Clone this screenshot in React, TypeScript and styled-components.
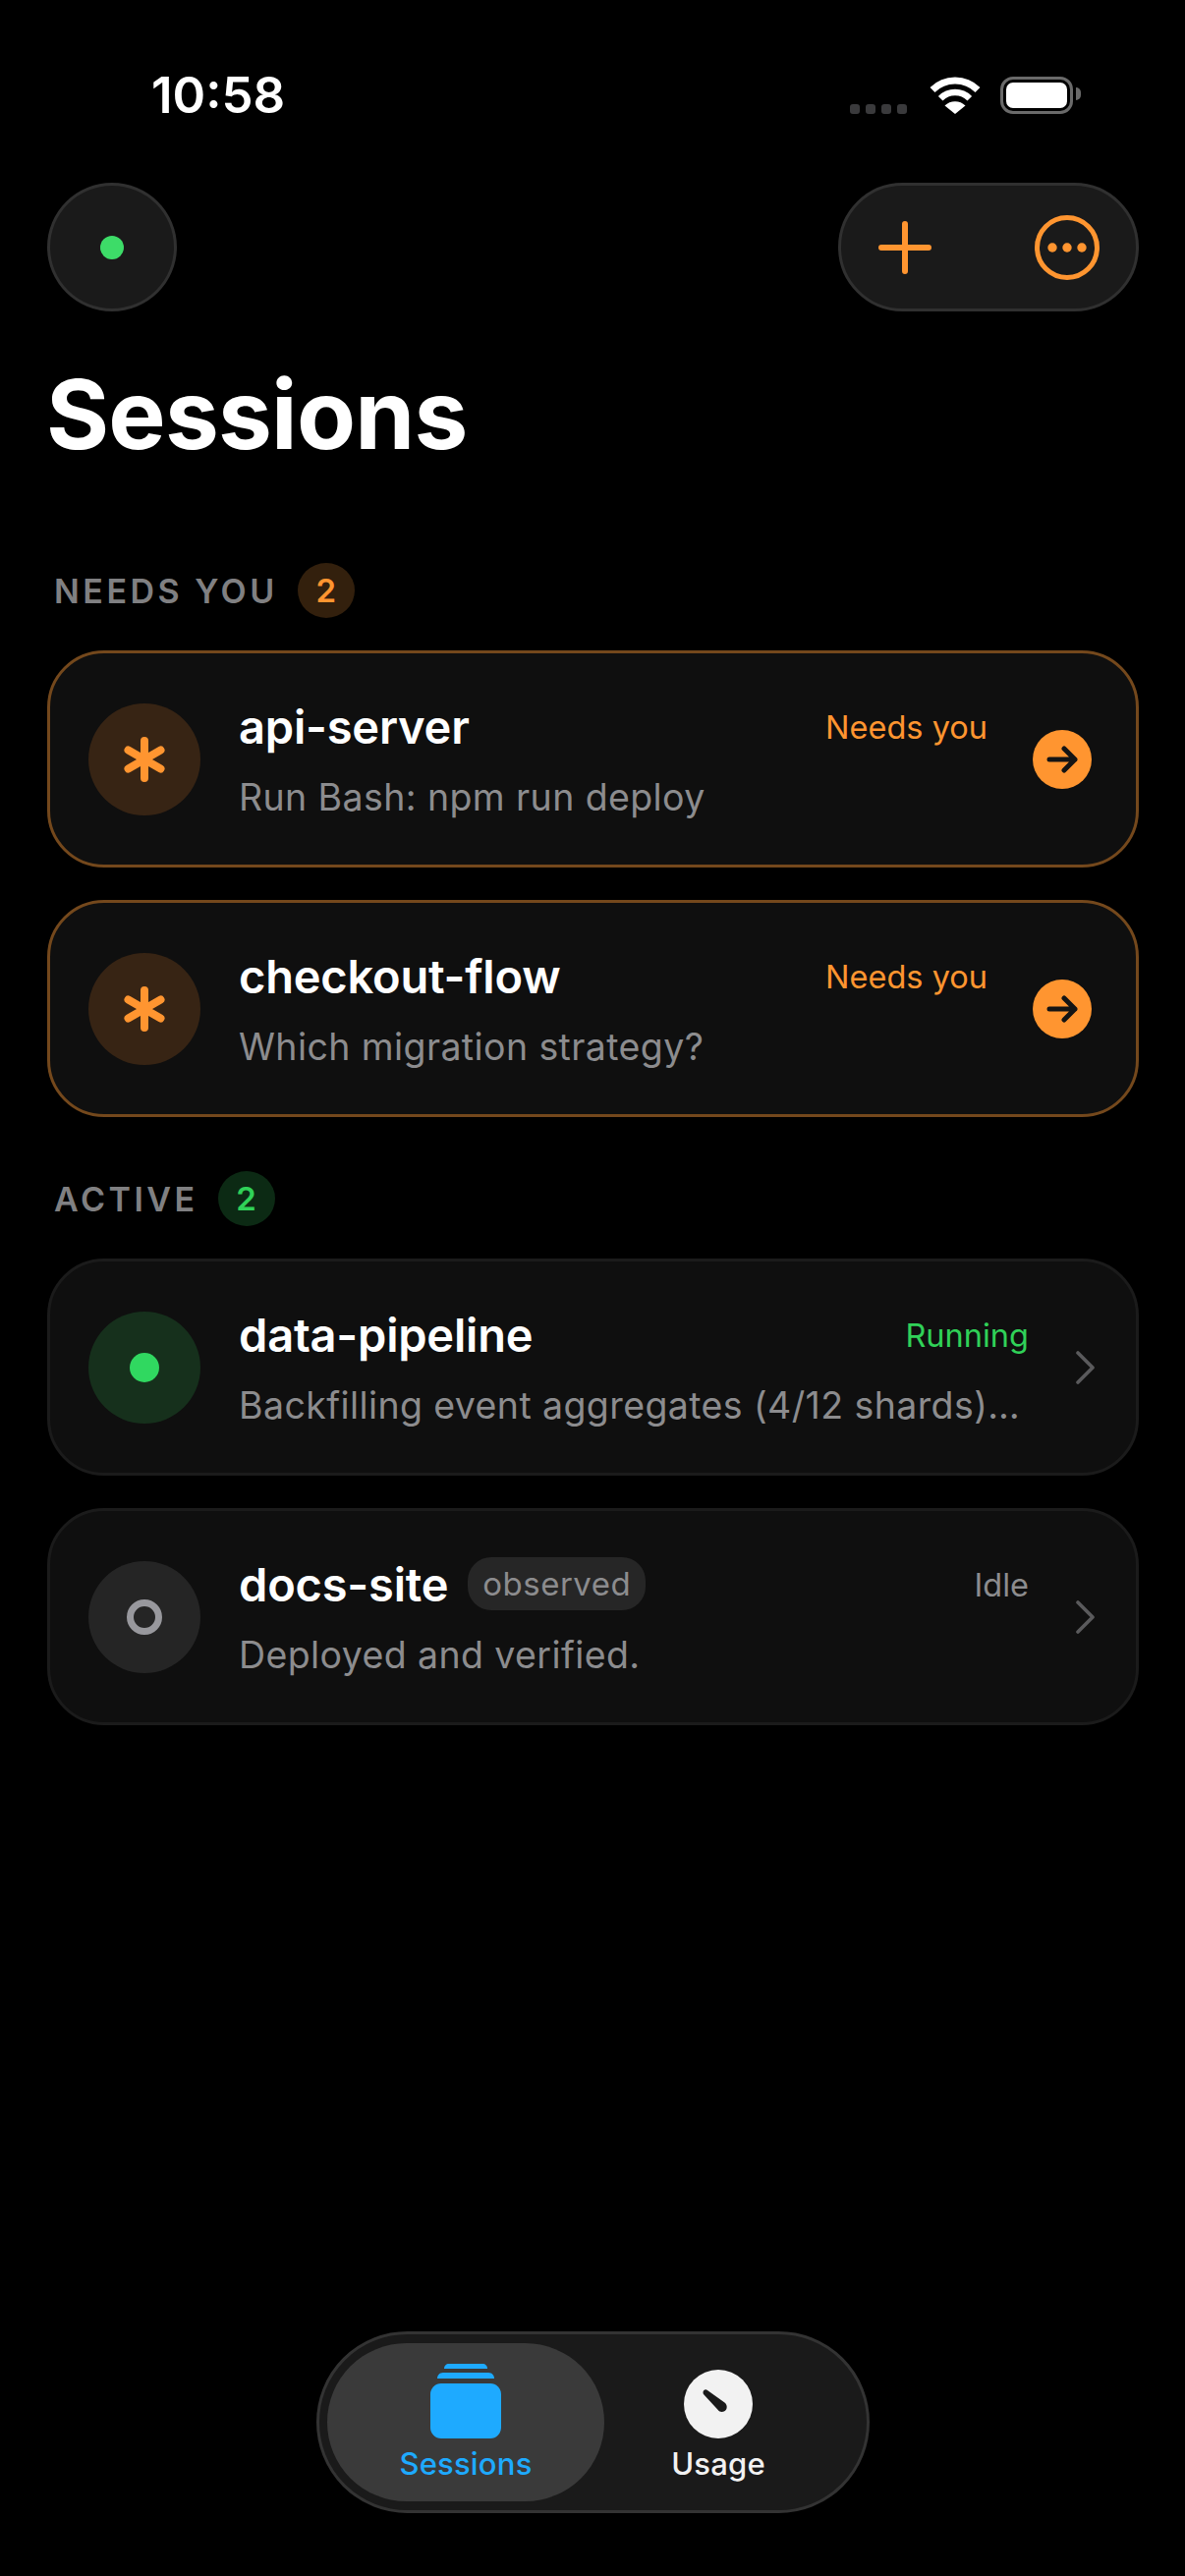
import React from 'react'
import styled, { createGlobalStyle } from 'styled-components'

const ORANGE = '#ff9530'
const GREEN = '#30d158'
const BLUE = '#1eaaff'
const GREY = '#8c8c8e'

type Tone = 'orange' | 'green' | 'grey'

const toneColor = { orange: ORANGE, green: GREEN, grey: GREY }
const toneBack = { orange: '#372414', green: '#16301c', grey: '#252525' }
const badgeBack = { orange: '#33200d', green: '#0c2a14', grey: '#252525' }

const sections: {
  title: string
  tone: Tone
  sessions: { name: string; detail: string; status: string; tone: Tone; tag?: string }[]
}[] = [
  {
    title: 'NEEDS YOU',
    tone: 'orange',
    sessions: [
      { name: 'api-server', detail: 'Run Bash: npm run deploy', status: 'Needs you', tone: 'orange' },
      { name: 'checkout-flow', detail: 'Which migration strategy?', status: 'Needs you', tone: 'orange' },
    ],
  },
  {
    title: 'ACTIVE',
    tone: 'green',
    sessions: [
      { name: 'data-pipeline', detail: 'Backfilling event aggregates (4/12 shards)…', status: 'Running', tone: 'green' },
      { name: 'docs-site', detail: 'Deployed and verified.', status: 'Idle', tone: 'grey', tag: 'observed' },
    ],
  },
]

const Asterisk = () => (
  <svg width="50" height="50" viewBox="0 0 50 50" fill="none" stroke={ORANGE} strokeWidth="8" strokeLinecap="round">
    <path d="M25 6v38M8.500 15.500l33 19M41.500 15.500l-33 19" />
  </svg>
)

const WifiIcon = () => (
  <svg width="56" height="38" viewBox="0 0 56 38" fill="none">
    <path d="M5 13.500a32.500 32.500 0 0 1 46 0" stroke="#fff" strokeWidth="7" />
    <path d="M13.200 22.200a21 21 0 0 1 29.600 0" stroke="#fff" strokeWidth="6.500" />
    <path d="M28 38L17.500 29.500a15 15 0 0 1 21 0Z" fill="#fff" />
  </svg>
)

const Arrow = () => (
  <svg width="34" height="30" viewBox="0 0 34 30" fill="none" stroke="#141414" strokeWidth="5" strokeLinecap="round" strokeLinejoin="round">
    <path d="M4 15h26M19 4l11 11-11 11" />
  </svg>
)

const Chevron = () => (
  <svg width="19" height="34" viewBox="0 0 19 34" fill="none" stroke="#5a5a5c" strokeWidth="3.600" strokeLinecap="round" strokeLinejoin="round">
    <path d="M2 2l15 15L2 32" />
  </svg>
)

const StackIcon = () => (
  <svg width="72" height="76" viewBox="0 0 72 76" fill={BLUE}>
    <path d="M14 5c0-3 2-5 5-5h34c3 0 5 2 5 5H14Z" />
    <path d="M7 15c0-3 2-6 6-6h46c4 0 6 3 6 6H7Z" />
    <rect x="0" y="20" width="72" height="56" rx="11" />
  </svg>
)

const GaugeIcon = () => (
  <svg width="70" height="70" viewBox="0 0 70 70">
    <circle cx="35" cy="35" r="35" fill="#f2f2f2" />
    <path d="M20 21.500c1-1.500 2.800-1.700 4-.5L41.500 33.500c2.500 2 3 5.500 1 7.800-2.200 2.400-6 2.200-8-.5L20 25c-.6-1-.7-2.500 0-3.500Z" fill="#1a1a1a" />
  </svg>
)

export default function App() {
  return (
    <Screen>
      <GlobalStyle />
      <StatusBar>
        <Clock>10:58</Clock>
        <StatusIcons>
          <SignalDots>
            <i />
            <i />
            <i />
            <i />
          </SignalDots>
          <WifiIcon />
          <Battery>
            <BatteryFill />
          </Battery>
        </StatusIcons>
      </StatusBar>

      <TopBar>
        <RoundButton>
          <StatusDot />
        </RoundButton>
        <ActionPill>
          <svg width="54" height="54" viewBox="0 0 54 54" fill="none" stroke={ORANGE} strokeWidth="6" strokeLinecap="round">
            <path d="M27 3v48M3 27h48" />
          </svg>
          <svg width="66" height="66" viewBox="0 0 66 66" fill="none">
            <circle cx="33" cy="33" r="30.500" stroke={ORANGE} strokeWidth="5" />
            <circle cx="18" cy="33" r="4.700" fill={ORANGE} />
            <circle cx="33" cy="33" r="4.700" fill={ORANGE} />
            <circle cx="48" cy="33" r="4.700" fill={ORANGE} />
          </svg>
        </ActionPill>
      </TopBar>

      <Title>Sessions</Title>

      {sections.map((section) => (
        <Section key={section.title}>
          <SectionHead>
            <SectionTitle>{section.title}</SectionTitle>
            <CountBadge $tone={section.tone}>{section.sessions.length}</CountBadge>
          </SectionHead>
          {section.sessions.map((session) => (
            <Card key={session.name} $urgent={session.tone === 'orange'}>
              <StateIcon $tone={session.tone}>
                {session.tone === 'orange' && <Asterisk />}
                {session.tone === 'green' && <GreenDot />}
                {session.tone === 'grey' && <HollowDot />}
              </StateIcon>
              <CardBody>
                <NameRow>
                  <Name>{session.name}</Name>
                  {session.tag && <Tag>{session.tag}</Tag>}
                  <Status $tone={session.tone}>{session.status}</Status>
                </NameRow>
                <Detail>{session.detail}</Detail>
              </CardBody>
              {session.tone === 'orange' ? (
                <ArrowButton>
                  <Arrow />
                </ArrowButton>
              ) : (
                <ChevronSlot>
                  <Chevron />
                </ChevronSlot>
              )}
            </Card>
          ))}
        </Section>
      ))}

      <TabBar>
        <Tab $active>
          <TabIcon>
            <StackIcon />
          </TabIcon>
          <TabLabel $active>Sessions</TabLabel>
        </Tab>
        <Tab>
          <TabIcon>
            <GaugeIcon />
          </TabIcon>
          <TabLabel>Usage</TabLabel>
        </Tab>
      </TabBar>
    </Screen>
  )
}

const GlobalStyle = createGlobalStyle`
  html, body {
    margin: 0;
    padding: 0;
    background: #000;
  }
  * {
    box-sizing: border-box;
  }
`

const Screen = styled.div`
  width: 1206px;
  height: 2622px;
  background: #000;
  color: #fff;
  font-family: Inter, 'Liberation Sans', sans-serif;
  display: flex;
  flex-direction: column;
  overflow: hidden;
`

const StatusBar = styled.div`
  height: 186px;
  padding: 66px 114px 0 154px;
  display: flex;
  justify-content: space-between;
  align-items: flex-start;
`

const Clock = styled.div`
  font-size: 51px;
  line-height: 62px;
  font-weight: 600;
`

const StatusIcons = styled.div`
  display: flex;
  align-items: flex-end;
  margin-top: 12px;
`

const SignalDots = styled.div`
  display: flex;
  gap: 6px;
  margin-right: 21px;

  i {
    width: 10px;
    height: 10px;
    border-radius: 3px;
    background: #3a3a3c;
  }
`

const Battery = styled.div`
  position: relative;
  width: 74px;
  height: 38px;
  margin-left: 18px;
  padding: 3px;
  border: 3px solid #6a6a6a;
  border-radius: 13px;

  &::after {
    content: '';
    position: absolute;
    right: -11px;
    top: 8px;
    width: 5px;
    height: 13px;
    border-radius: 0 5px 5px 0;
    background: #6a6a6a;
  }
`

const BatteryFill = styled.div`
  width: 100%;
  height: 100%;
  border-radius: 7px;
  background: #fff;
`

const TopBar = styled.div`
  padding: 0 47px 0 48px;
  display: flex;
  justify-content: space-between;
`

const RoundButton = styled.div`
  width: 132px;
  height: 131px;
  border-radius: 50%;
  background: #1a1a1a;
  border: 3px solid #303030;
  display: flex;
  align-items: center;
  justify-content: center;
`

const StatusDot = styled.div`
  width: 24px;
  height: 24px;
  border-radius: 50%;
  background: #3ddc68;
`

const ActionPill = styled.div`
  width: 306px;
  height: 131px;
  border-radius: 66px;
  background: #1a1a1a;
  border: 3px solid #303030;
  padding: 0 37px 0 38px;
  display: flex;
  align-items: center;
  justify-content: space-between;
`

const Title = styled.h1`
  margin: 45px 0 0;
  padding-left: 47px;
  font-size: 98px;
  line-height: 120px;
  font-weight: 700;
  letter-spacing: -0.8px;
`

const Section = styled.section`
  padding: 0 47px 0 48px;
  display: flex;
  flex-direction: column;
  gap: 33px;
  margin-top: 90px;

  & + & {
    margin-top: 54px;
  }
`

const SectionHead = styled.div`
  height: 58px;
  padding-left: 7px;
  display: flex;
  align-items: center;
  gap: 20px;
  margin-bottom: -1px;
`

const SectionTitle = styled.span`
  font-size: 34px;
  font-weight: 600;
  letter-spacing: 3.5px;
  color: #808082;
`

const CountBadge = styled.span<{ $tone: Tone }>`
  width: 58px;
  height: 56px;
  border-radius: 50%;
  font-size: 33px;
  font-weight: 600;
  display: flex;
  align-items: center;
  justify-content: center;
  color: ${(p) => toneColor[p.$tone]};
  background: ${(p) => badgeBack[p.$tone]};
`

const Card = styled.div<{ $urgent?: boolean }>`
  height: 221px;
  border-radius: 58px;
  background: #0f0f0f;
  border: 3px solid ${(p) => (p.$urgent ? '#74481c' : '#1b1b1b')};
  padding: 0 42px 0 39px;
  display: flex;
  align-items: center;
`

const StateIcon = styled.div<{ $tone: Tone }>`
  width: 114px;
  height: 114px;
  flex: none;
  border-radius: 50%;
  background: ${(p) => toneBack[p.$tone]};
  display: flex;
  align-items: center;
  justify-content: center;
`

const GreenDot = styled.div`
  width: 30px;
  height: 30px;
  border-radius: 50%;
  background: #30d860;
`

const HollowDot = styled.div`
  width: 36px;
  height: 36px;
  border-radius: 50%;
  border: 7px solid #98989d;
`

const CardBody = styled.div`
  flex: 1;
  min-width: 0;
  margin: 2px 0 0 39px;
  display: flex;
  flex-direction: column;
  gap: 21px;
`

const NameRow = styled.div`
  height: 56px;
  display: flex;
  align-items: center;
`

const Name = styled.span`
  font-size: 47px;
  font-weight: 600;
  letter-spacing: -0.2px;
`

const Tag = styled.span`
  margin-left: 20px;
  height: 54px;
  padding: 0 15px;
  border-radius: 24px;
  background: #262626;
  color: ${GREY};
  font-size: 33px;
  letter-spacing: 0.5px;
  display: flex;
  align-items: center;
`

const Status = styled.span<{ $tone: Tone }>`
  margin: 3px 0 0 auto;
  font-size: 32.5px;
  color: ${(p) => toneColor[p.$tone]};
`

const Detail = styled.div`
  font-size: 37.5px;
  line-height: 48px;
  color: ${GREY};
  letter-spacing: 0.4px;
  white-space: nowrap;
`

const ArrowButton = styled.div`
  width: 60px;
  height: 60px;
  margin: 0 3px 0 46px;
  flex: none;
  border-radius: 50%;
  background: ${ORANGE};
  display: flex;
  align-items: center;
  justify-content: center;
`

const ChevronSlot = styled.div`
  margin-left: 48px;
  flex: none;
  display: flex;
`

const TabBar = styled.nav`
  margin: auto 0 64px 322px;
  width: 563px;
  height: 185px;
  border-radius: 93px;
  background: #1a1a1a;
  border: 3px solid #333;
  padding: 9px 8px;
  display: flex;
`

const Tab = styled.div<{ $active?: boolean }>`
  width: ${(p) => (p.$active ? '282px' : '232px')};
  border-radius: 81px;
  background: ${(p) => (p.$active ? '#3a3a3a' : 'transparent')};
  display: flex;
  flex-direction: column;
  align-items: center;
`

const TabIcon = styled.div`
  height: 76px;
  margin-top: 21px;
  display: flex;
  align-items: flex-end;
`

const TabLabel = styled.span<{ $active?: boolean }>`
  margin-top: 6px;
  font-size: 31px;
  line-height: 40px;
  font-weight: 500;
  letter-spacing: 0.2px;
  color: ${(p) => (p.$active ? BLUE : '#f2f2f2')};
`
